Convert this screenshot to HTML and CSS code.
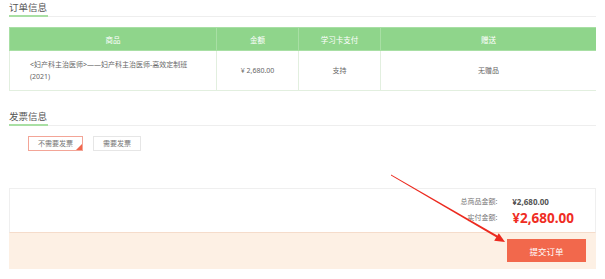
FILE: index.html
```html
<!DOCTYPE html>
<html lang="zh-CN">
<head>
  <meta charset="UTF-8" />
  <meta name="viewport" content="width=device-width, initial-scale=1.0"/>
  <title>确认订单</title>
  <link rel="stylesheet" href="styles.css">
</head>
<body>
  <div class="page">
    <div class="section-title"><span>订单信息</span></div>

    <table class="order-table">
      <thead>
        <tr>
          <th class="col-goods">商品</th>
          <th class="col-price">金额</th>
          <th class="col-card">学习卡支付</th>
          <th>赠送</th>
        </tr>
      </thead>
      <tbody>
        <tr>
          <td class="goods-name">&lt;妇产科主治医师&gt;——妇产科主治医师-高效定制班(2021)</td>
          <td>¥ 2,680.00</td>
          <td>支持</td>
          <td>无赠品</td>
        </tr>
      </tbody>
    </table>

    <div class="section-title invoice-title"><span>发票信息</span></div>
    <div class="invoice-opts">
      <span class="opt active">不需要发票<i class="corner"></i></span>
      <span class="opt">需要发票</span>
    </div>

    <div class="summary">
      <div class="totals">
        <span class="label">总商品金额:</span>
        <span class="amount">¥2,680.00</span>
        <span class="label">实付金额:</span>
        <span class="pay">¥2,680.00</span>
      </div>
      <div class="submit-bar">
        <button type="button">提交订单</button>
      </div>
    </div>

    <!-- annotation arrow drawn over the page -->
    <svg class="arrow" width="605" height="279" viewBox="0 0 605 279">
      <polygon points="391,174.6 391,175.4 498.3,238.4 497.3,235.6" fill="#ec2a1f"/>
      <polygon points="505,242 494.2,240.8 498.8,233.2" fill="#ec2a1f"/>
    </svg>
  </div>
</body>
</html>
```

FILE: styles.css
```css
body {
  margin: 0;
  background: #fff;
  font-family: "Noto Sans", "Noto Sans CJK SC", sans-serif;
  color: #666;
}

.page {
  position: relative;
  width: 587px;
  padding-left: 9px;
  height: 279px;
  overflow: hidden;
}

.section-title {
  display: flex;
  align-items: flex-start;
  border-bottom: 1px solid #eeeeee;
  padding-top: 1px;
  height: 15px;
}

.section-title span {
  display: block;
  white-space: nowrap;
  font-size: 9.5px;
  line-height: 14px;
  color: #555;
  padding-right: 1px;
  border-bottom: 2px solid #a9dfa4;
}

.order-table {
  margin-top: 10px;
  width: 588px;
  border-collapse: collapse;
  table-layout: fixed;
  font-size: 7px;
}

.order-table th,
.order-table td {
  padding: 0;
  border: 1px solid #e2efdf;
  text-align: center;
  font-weight: normal;
}

.order-table th {
  background: #8fd58b;
  color: #fff;
  height: 22px;
  font-size: 7.5px;
  border-color: #a8dfa4;
}

.order-table td {
  height: 39px;
  color: #666;
  line-height: 12px;
}

.order-table .col-goods { width: 206px; }
.order-table .col-price { width: 81px; }
.order-table .col-card { width: 81px; }

.order-table td.goods-name {
  text-align: left;
  padding: 0 20px;
}

.invoice-title {
  margin-top: 18px;
}

.invoice-opts {
  display: flex;
  gap: 10px;
  margin: 10px 0 0 19px;
}

.opt {
  position: relative;
  display: block;
  height: 13px;
  line-height: 13px;
  padding: 0 8px;
  font-size: 7px;
  color: #777;
  border: 1px solid #e6e6e6;
  text-align: center;
  white-space: nowrap;
}

.opt.active {
  width: 37px;
  border-color: #f3a597;
}

.opt:not(.active) {
  width: 30px;
}

.corner {
  position: absolute;
  right: 0;
  bottom: 0;
  width: 0;
  height: 0;
  border-left: 6px solid transparent;
  border-bottom: 6px solid #f0674d;
}

.summary {
  margin-top: 37px;
  width: 587px;
}

.totals {
  display: grid;
  grid-template-columns: auto auto;
  justify-content: end;
  align-items: center;
  column-gap: 15px;
  padding: 7px 21px 4px 0;
  border: 1px solid #efefef;
  border-bottom: 1px solid #f5dccb;
}

.totals .label {
  font-size: 7px;
  line-height: 12px;
  color: #777;
  text-align: right;
  white-space: nowrap;
}

.totals .amount {
  font-size: 8px;
  font-weight: bold;
  color: #555;
  line-height: 12px;
}

.totals .pay {
  font-size: 13.5px;
  font-weight: bold;
  color: #ef2d24;
  line-height: 20px;
}

.submit-bar {
  background: #fdf0e4;
  height: 36px;
  display: flex;
  justify-content: flex-end;
  align-items: flex-start;
  padding: 6px 10px 0 0;
  box-sizing: border-box;
}

.submit-bar button {
  width: 79px;
  height: 23px;
  border: none;
  background: #f2684c;
  color: #fff;
  font-family: inherit;
  font-size: 8.5px;
  cursor: pointer;
}

.arrow {
  position: absolute;
  left: 0;
  top: 0;
  pointer-events: none;
}
```
